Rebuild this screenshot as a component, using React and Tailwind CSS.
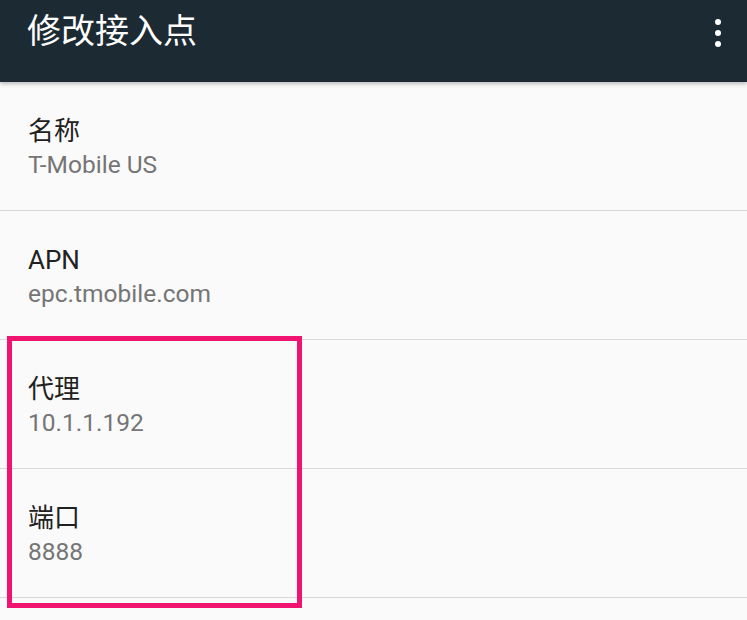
// App.jsx
const rows = [
  { title: "名称", value: "T-Mobile US" },
  { title: "APN", value: "epc.tmobile.com" },
  { title: "代理", value: "10.1.1.192" },
  { title: "端口", value: "8888" },
]

const font = { fontFamily: "Roboto, 'Noto Sans CJK SC', sans-serif" }

export default function App() {
  return (
    <div className="relative w-[747px] h-[620px] overflow-hidden bg-[#fafafa]" style={font}>
      <div className="relative z-10 h-[82px] bg-[#1c2a33] flex items-start justify-between pl-[27px] pr-[26px] pt-[11px] shadow-[0_2px_4px_rgba(0,0,0,0.25)]">
        <span className="text-[34px] leading-[40px] text-white whitespace-nowrap">修改接入点</span>
        <div className="flex flex-col items-center gap-[5px] pt-[8px]">
          <span className="w-[6px] h-[6px] rounded-full bg-white" />
          <span className="w-[6px] h-[6px] rounded-full bg-white" />
          <span className="w-[6px] h-[6px] rounded-full bg-white" />
        </div>
      </div>

      <div className="flex flex-col">
        {rows.map((r) => (
          <div key={r.title} className="h-[129px] border-b border-[#d8d8d8] flex flex-col justify-center pl-[28px] pt-[4px]">
            <div className="text-[26px] leading-[34px] text-[#212121]">{r.title}</div>
            <div className="text-[24.5px] leading-[34px] text-[#757575]">{r.value}</div>
          </div>
        ))}
      </div>

      {/* highlight box */}
      <div className="absolute left-[7px] top-[336px] w-[295px] h-[272px] border-[5px] border-[#f0136f]" />
    </div>
  )
}
